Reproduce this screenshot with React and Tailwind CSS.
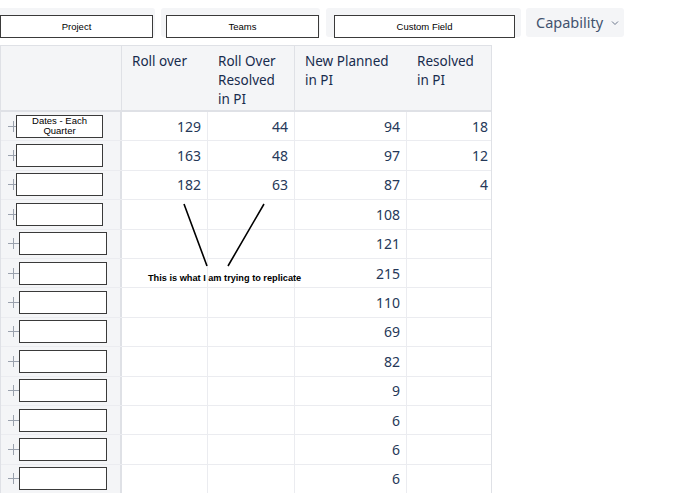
import React from "react";

const rows = [
  { label: "Dates - Each Quarter", a: 129, b: 44, c: 94, d: 18, wide: false },
  { label: "", a: 163, b: 48, c: 97, d: 12, wide: false },
  { label: "", a: 182, b: 63, c: 87, d: 4, wide: false },
  { label: "", c: 108, wide: false },
  { label: "", c: 121, wide: true },
  { label: "", c: 215, wide: true },
  { label: "", c: 110, wide: true },
  { label: "", c: 69, wide: true },
  { label: "", c: 82, wide: true },
  { label: "", c: 9, wide: true },
  { label: "", c: 6, wide: true },
  { label: "", c: 6, wide: true },
  { label: "", c: 6, wide: true },
];

const cols = "grid grid-cols-[121px_86px_87px_112px_86px]";

const FieldBox = ({ children, className }) => (
  <div
    className={`flex h-[23px] items-center justify-center border border-[#3a3a3a] bg-white text-center text-[9.5px] leading-[10px] text-black ${className}`}
    style={{ fontFamily: "'Liberation Sans', Arial, sans-serif" }}
  >
    {children}
  </div>
);

const Plus = () => (
  <svg width="11" height="11" viewBox="0 0 11 11" className="shrink-0">
    <path d="M5.5 0v11M0 5.5h11" stroke="#9aa1ad" strokeWidth="1" />
  </svg>
);

export default function App() {
  return (
    <div
      className="relative h-[493px] w-[690px] overflow-hidden bg-white"
      style={{ fontFamily: "'Noto Sans', 'Open Sans', sans-serif" }}
    >
      {/* filter bar */}
      <div className="flex items-start gap-[6px] pt-[8px]">
        <div className="h-[29px] w-[155px] rounded-r-[3px] bg-[#f4f5f7] pt-[7px]">
          <FieldBox className="w-[153px] h-[22px]">Project</FieldBox>
        </div>
        <div className="h-[29px] w-[159px] rounded-[3px] bg-[#f4f5f7] pl-[5px] pt-[7px]">
          <FieldBox className="w-[153px] h-[22px]">Teams</FieldBox>
        </div>
        <div className="h-[29px] w-[195px] rounded-[3px] bg-[#f4f5f7] pl-[8px] pt-[7px]">
          <FieldBox className="w-[181px] h-[22px]">Custom Field</FieldBox>
        </div>
        <div className="-ml-[1px] flex h-[29px] w-[98px] items-center gap-[8px] rounded-[3px] bg-[#f4f5f7] pl-[10px] text-[14.5px] text-[#42526e]">
          <span>Capability</span>
          <svg width="8" height="8" viewBox="0 0 8 8">
            <path d="M1 2.5l3 3 3-3" fill="none" stroke="#6b778c" strokeWidth="1" />
          </svg>
        </div>
      </div>

      {/* table */}
      <div className="mt-[8px] w-[492px] border border-[#dfe1e6]">
        <div className={`${cols} h-[66px] border-b-2 border-[#dfe1e6] bg-[#f4f5f7] text-[13.5px] leading-[19px] text-[#172b4d]`}>
          <div className="border-r border-[#dfe1e6]" />
          <div className="pl-[10px] pt-[6px]">Roll over</div>
          <div className="border-r border-[#dfe1e6] pl-[10px] pt-[6px]">
            Roll Over
            <br />
            Resolved
            <br />
            in PI
          </div>
          <div className="pl-[10px] pt-[6px]">
            New Planned
            <br />
            in PI
          </div>
          <div className="pl-[10px] pt-[6px]">
            Resolved
            <br />
            in PI
          </div>
        </div>
        {rows.map((r, i) => (
          <div
            key={i}
            className={`${cols} h-[29.4px] border-b border-[#ebecf0] text-[14px] text-[#253858]`}
          >
            <div className="flex items-center border-r-2 border-[#dfe1e6] bg-[#f4f5f7] pl-[7px]">
              <Plus />
              <FieldBox className={r.wide ? "w-[88px]" : "ml-[-3px] w-[87px]"}>
                {r.label}
              </FieldBox>
            </div>
            <div className="flex items-center justify-end border-r border-[#ebecf0] pr-[6px]">{r.a}</div>
            <div className="flex items-center justify-end border-r border-[#ebecf0] pr-[6px]">{r.b}</div>
            <div className="flex items-center justify-end border-r border-[#ebecf0] pr-[6px]">{r.c}</div>
            <div className="flex items-center justify-end pr-[5px]">{r.d}</div>
          </div>
        ))}
      </div>

      {/* annotation */}
      <svg className="pointer-events-none absolute left-0 top-0" width="690" height="493">
        <path d="M184 204L207 266M264 204L228 266" stroke="#000" strokeWidth="1.6" />
      </svg>
      <div
        className="absolute left-[148px] top-[272px] text-[9.2px] font-bold text-black"
        style={{ fontFamily: "'Liberation Sans', Arial, sans-serif" }}
      >
        This is what I am trying to replicate
      </div>
    </div>
  );
}
